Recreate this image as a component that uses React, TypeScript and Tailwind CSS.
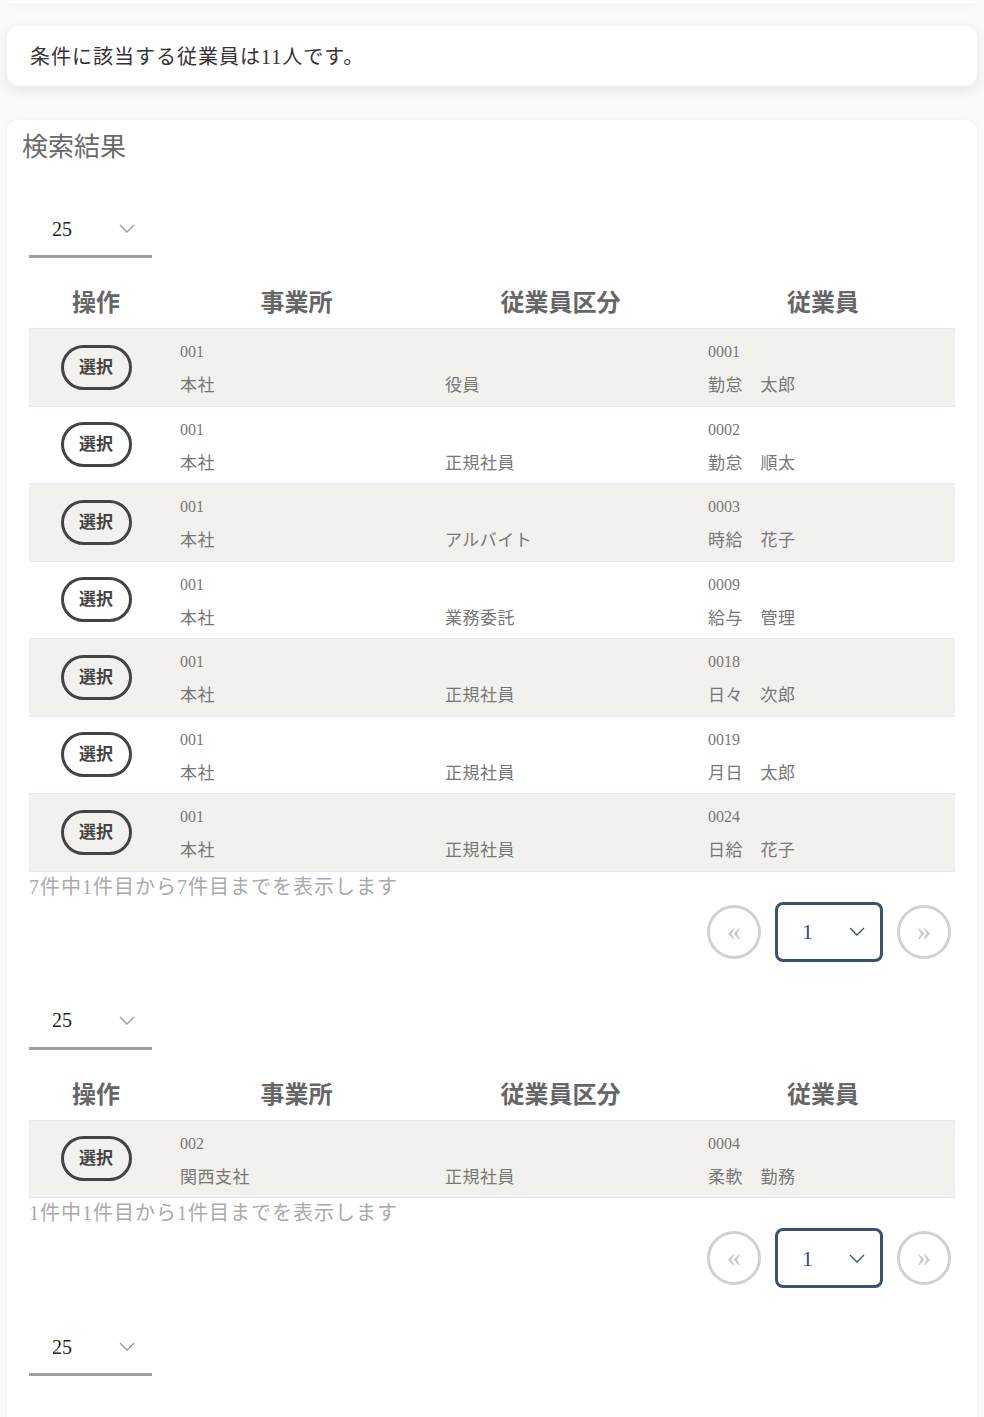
import React from "react"

type Row = {
  officeCode: string
  office: string
  category: string
  empCode: string
  name: string
}

const firstRows: Row[] = [
  { officeCode: "001", office: "本社", category: "役員", empCode: "0001", name: "勤怠　太郎" },
  { officeCode: "001", office: "本社", category: "正規社員", empCode: "0002", name: "勤怠　順太" },
  { officeCode: "001", office: "本社", category: "アルバイト", empCode: "0003", name: "時給　花子" },
  { officeCode: "001", office: "本社", category: "業務委託", empCode: "0009", name: "給与　管理" },
  { officeCode: "001", office: "本社", category: "正規社員", empCode: "0018", name: "日々　次郎" },
  { officeCode: "001", office: "本社", category: "正規社員", empCode: "0019", name: "月日　太郎" },
  { officeCode: "001", office: "本社", category: "正規社員", empCode: "0024", name: "日給　花子" },
]

const secondRows: Row[] = [
  { officeCode: "002", office: "関西支社", category: "正規社員", empCode: "0004", name: "柔軟　勤務" },
]

function Chevron({ className }: { className?: string }) {
  return (
    <svg viewBox="0 0 16 9" width="16" height="9" className={className} fill="none">
      <polyline points="1,1 8,8 15,1" stroke="currentColor" strokeWidth="1.3" />
    </svg>
  )
}

function PerPage() {
  return (
    <div className="w-[123px] h-[58px] border-b-[3px] border-[#a0a0a0] flex items-center justify-between pl-[23px] pr-[17px] pt-[2px]">
      <span className="text-[20px] text-[#222]">25</span>
      <Chevron className="text-[#999]" />
    </div>
  )
}

function ResultTable({ rows }: { rows: Row[] }) {
  return (
    <div className="mt-[20px]">
      <div className="grid grid-cols-[134px_267px_261px_1fr] h-[50px] items-center text-[24px] font-semibold text-[#666] text-center">
        <div>操作</div>
        <div>事業所</div>
        <div>従業員区分</div>
        <div>従業員</div>
      </div>
      <div className="border-t border-[#e8e9f0]">
        {rows.map((r, i) => (
          <div
            key={r.empCode}
            className={`grid grid-cols-[134px_267px_261px_1fr] h-[77.5px] border-b border-[#e8e9f0] ${
              i % 2 === 0 ? "bg-[#f2f1ee]" : "bg-white"
            }`}
          >
            <div className="flex items-center justify-center">
              <button className="w-[71px] h-[45px] rounded-full border-[3px] border-[#444] text-[17px] font-semibold text-[#444] leading-none">
                選択
              </button>
            </div>
            <div className="pl-[17px] pt-[12px] flex flex-col gap-[11px] text-[#777]">
              <span className="text-[16px] leading-[22px]">{r.officeCode}</span>
              <span className="text-[17px] leading-[24px] tracking-[0.5px]">{r.office}</span>
            </div>
            <div className="pl-[15px] pt-[12px] flex flex-col gap-[11px] text-[#777]">
              <span className="text-[16px] leading-[22px]">&nbsp;</span>
              <span className="text-[17px] leading-[24px] tracking-[0.5px]">{r.category}</span>
            </div>
            <div className="pl-[17px] pt-[12px] flex flex-col gap-[11px] text-[#777]">
              <span className="text-[16px] leading-[22px]">{r.empCode}</span>
              <span className="text-[17px] leading-[24px] tracking-[0.5px]">{r.name}</span>
            </div>
          </div>
        ))}
      </div>
    </div>
  )
}

function Pager() {
  return (
    <div className="flex justify-end items-center gap-[14px] pr-[4px]">
      <button className="w-[54px] h-[54px] rounded-full border-[3px] border-[#d2d2cc] text-[#c8c8c2] text-[28px] leading-none flex items-center justify-center pb-[2px]">
        «
      </button>
      <div className="w-[108px] h-[60px] rounded-lg border-[3px] border-[#3a5270] flex items-center justify-between pl-[24px] pr-[15px] text-[#3a5270]">
        <span className="text-[22px]">1</span>
        <Chevron />
      </div>
      <button className="w-[54px] h-[54px] rounded-full border-[3px] border-[#d2d2cc] text-[#c8c8c2] text-[28px] leading-none flex items-center justify-center pb-[2px]">
        »
      </button>
    </div>
  )
}

function Section({ rows, total }: { rows: Row[]; total: number }) {
  return (
    <div>
      <PerPage />
      <ResultTable rows={rows} />
      <p className="text-[20px] leading-[30px] text-[#aaa] tracking-[1px]">
        {total}件中1件目から{total}件目までを表示します
      </p>
      <Pager />
    </div>
  )
}

export default function App() {
  return (
    <main className="min-h-screen bg-[#f9f9f9] font-['Liberation_Serif','Noto_Sans_CJK_JP',serif] overflow-hidden">
      <div className="mx-[7px] h-[3px] bg-white rounded-b-xl shadow-[0_2px_8px_rgba(0,0,0,0.06)]" />

      <div className="mx-[7px] mt-[23px] h-[60px] bg-white rounded-xl shadow-[0_4px_12px_rgba(0,0,0,0.08)] flex items-center px-[23px] pt-[2px]">
        <p className="text-[20px] text-[#333] tracking-[1px]">条件に該当する従業員は11人です。</p>
      </div>

      <section className="mx-[7px] mt-[34px] bg-white rounded-t-xl shadow-[0_0_6px_rgba(0,0,0,0.04)] pb-10">
        <h2 className="pl-[15px] pt-[10px] text-[26px] leading-[36px] text-[#6a6a6a]">検索結果</h2>
        <div className="px-[22px] pt-[34px] flex flex-col gap-[30px]">
          <Section rows={firstRows} total={7} />
          <Section rows={secondRows} total={1} />
          <div>
            <PerPage />
            <div className="h-[200px]" />
          </div>
        </div>
      </section>
    </main>
  )
}
